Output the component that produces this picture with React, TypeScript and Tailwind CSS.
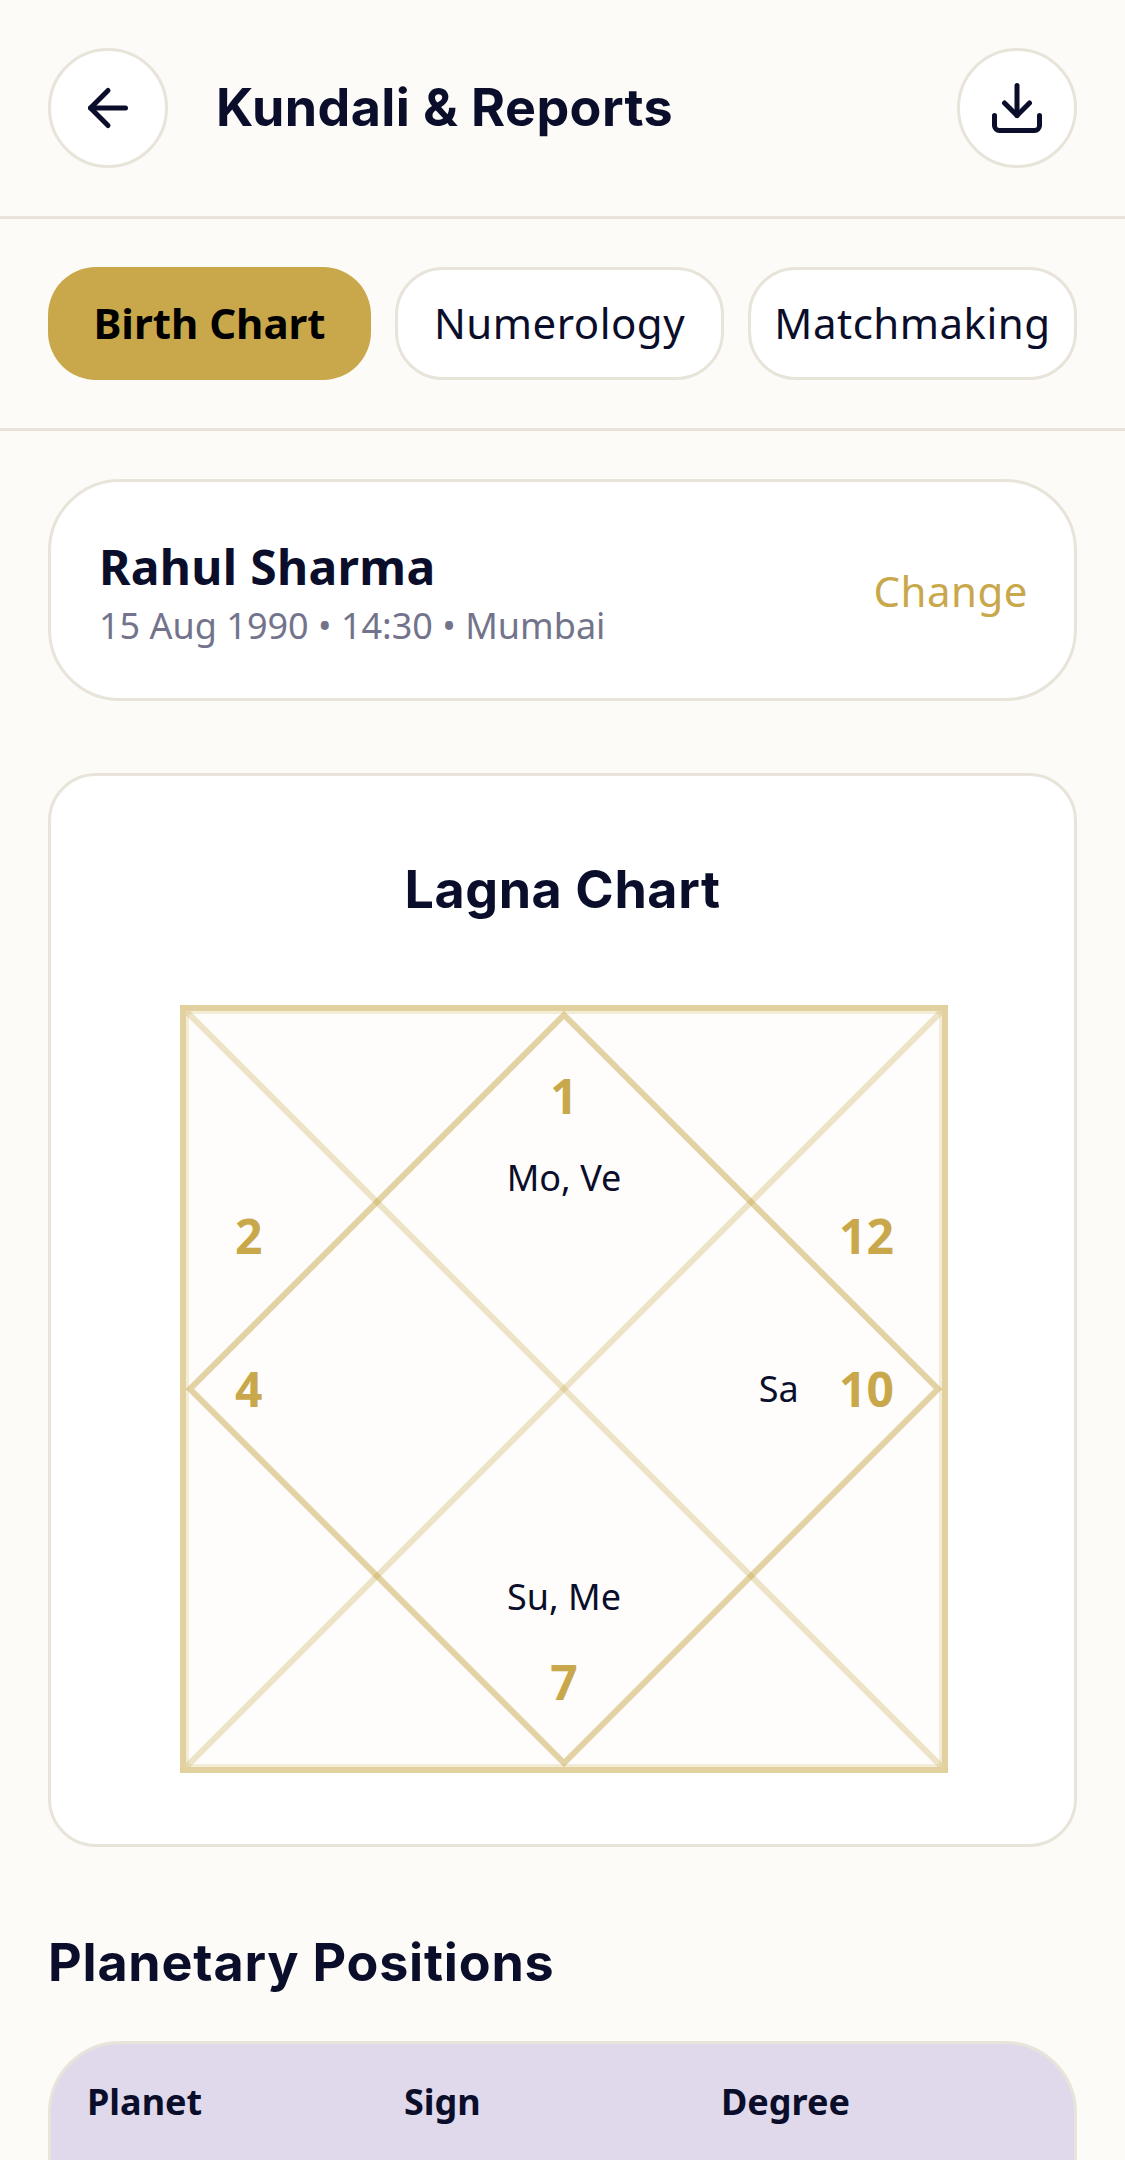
import {ArrowLeft, Download} from "lucide-react";

const labels = [
    {text: "1", left: "50%", top: "11.3%", gold: true},
    {text: "Mo, Ve", left: "50%", top: "22.1%", gold: false},
    {text: "2", left: "8.3%", top: "29.8%", gold: true},
    {text: "12", left: "90%", top: "29.8%", gold: true},
    {text: "4", left: "8.3%", top: "50%", gold: true},
    {text: "Sa", left: "78.4%", top: "50%", gold: false},
    {text: "10", left: "90%", top: "50%", gold: true},
    {text: "Su, Me", left: "50%", top: "77.5%", gold: false},
    {text: "7", left: "50%", top: "88.8%", gold: true},
];

const tabs = ["Birth Chart", "Numerology", "Matchmaking"];

function LagnaChart() {
    return (
        <div className="relative ml-[3px] w-[768px] h-[768px] border-[6px] border-[#e3d09f] bg-[#fefdfb]">
            <svg viewBox="0 0 756 756" className="absolute inset-0 w-full h-full">
                <rect x="0" y="0" width="756" height="756" fill="none" stroke="#c8a84b" strokeOpacity="0.2" strokeWidth="6"/>
                <line x1="0" y1="0" x2="756" y2="756" stroke="#c8a84b" strokeOpacity="0.3" strokeWidth="6"/>
                <line x1="756" y1="0" x2="0" y2="756" stroke="#c8a84b" strokeOpacity="0.3" strokeWidth="6"/>
                <polygon points="378,4 752,378 378,752 4,378" fill="none" stroke="#c8a84b" strokeOpacity="0.5" strokeWidth="6"/>
            </svg>
            {labels.map((l) => (
                <span key={l.text} style={{left: l.left, top: l.top}}
                      className={l.gold
                          ? "absolute -translate-x-1/2 -translate-y-1/2 text-[48px] font-bold text-[#c8a84b] leading-none"
                          : "absolute -translate-x-1/2 -translate-y-1/2 text-[36px] text-[#0a0e2a] leading-none whitespace-nowrap"}>
                    {l.text}
                </span>
            ))}
        </div>
    );
}

export default function App() {
    return (
        <div className="h-[2160px] overflow-hidden bg-[#fcfbf7] text-[#0a0e2a] font-['Noto_Sans',sans-serif]">
            <header className="flex items-center justify-between h-[219px] px-12 border-b-[3px] border-[#e8e4da]">
                <div className="flex items-center gap-[48px]">
                    <button className="flex items-center justify-center w-[120px] h-[120px] rounded-full bg-white border-[3px] border-[#e8e4da]">
                        <ArrowLeft size={60}/>
                    </button>
                    <h1 className="text-[52px] font-bold font-['Inter',sans-serif] tracking-[0.4px]">Kundali &amp; Reports</h1>
                </div>
                <button className="flex items-center justify-center w-[120px] h-[120px] rounded-full bg-white border-[3px] border-[#e8e4da]">
                    <Download size={60}/>
                </button>
            </header>

            <nav className="flex gap-6 h-[212px] px-12 py-12 border-b-[3px] border-[#e8e4da]">
                {tabs.map((tab, i) => (
                    <button key={tab}
                            className={i === 0
                                ? "flex-1 pb-[2px] rounded-[48px] bg-[#c8a84b] text-[42px] font-bold text-black whitespace-nowrap"
                                : "flex-1 pb-[2px] rounded-[48px] bg-white border-[3px] border-[#e8e4da] text-[42px] tracking-[0.5px] whitespace-nowrap"}>
                        {tab}
                    </button>
                ))}
            </nav>

            <main className="px-12 pt-12">
                <section className="flex items-center justify-between h-[222px] pl-[48px] pr-[46px] rounded-[72px] bg-white border-[3px] border-[#e8e4da]">
                    <div className="pt-[6px]">
                        <h2 className="text-[48px] font-bold leading-[60px] tracking-[0.3px]">Rahul Sharma</h2>
                        <p className="mt-[5px] text-[36px] leading-[48px] text-[#73748c]">15 Aug 1990 • 14:30 • Mumbai</p>
                    </div>
                    <span className="text-[42px] tracking-[0.5px] text-[#c8a84b]">Change</span>
                </section>

                <section className="flex flex-col items-center h-[1074px] mt-[72px] pt-[78px] rounded-[48px] bg-white border-[3px] border-[#e8e4da]">
                    <h2 className="text-[52px] leading-[72px] font-bold font-['Inter',sans-serif] tracking-[0.6px] mb-[79px]">Lagna Chart</h2>
                    <LagnaChart/>
                </section>

                <h2 className="mt-[80px] text-[52px] leading-[72px] font-bold font-['Inter',sans-serif] tracking-[0.8px]">Planetary Positions</h2>

                <section className="mt-[42px] h-[160px] rounded-t-[72px] bg-[#e0d9eb] border-[3px] border-[#e8e4da]">
                    <div className="grid grid-cols-3 px-[36px] pt-[33px]">
                        <span className="text-[36px] font-bold leading-[50px]">Planet</span>
                        <span className="text-[36px] font-bold leading-[50px]">Sign</span>
                        <span className="text-[36px] font-bold leading-[50px]">Degree</span>
                    </div>
                </section>
            </main>
        </div>
    );
}
